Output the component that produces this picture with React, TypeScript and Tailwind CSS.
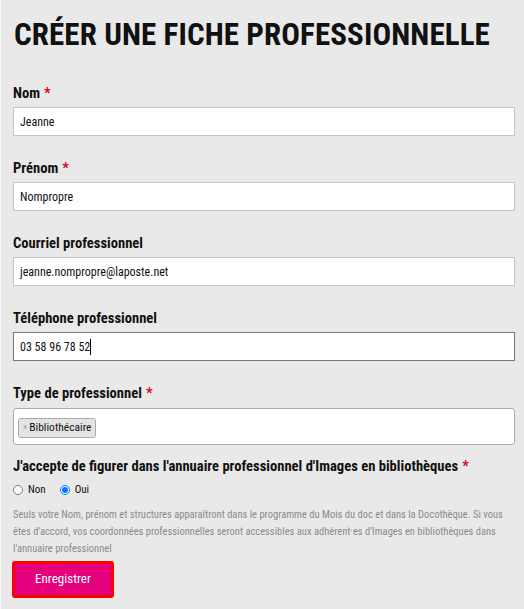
import { useState } from "react";

const font = "font-['Liberation_Sans_Narrow','Roboto_Condensed','Liberation_Sans',sans-serif]";

function Field({
  label,
  required,
  value,
  focused,
}: {
  label: string;
  required?: boolean;
  value: string;
  focused?: boolean;
}) {
  return (
    <div className="mb-[23px]">
      <label className="block text-[14.6px] font-bold leading-[18px] text-[#111] mb-[5px]">
        {label}
        {required && <span className="text-[#e2001a] ml-[4px]">*</span>}
      </label>
      <div
        className={
          "h-[29px] bg-white flex items-center px-[6px] text-[12px] text-[#111] border " +
          (focused ? "border-[#767676]" : "border-[#c4c4c4]")
        }
      >
        {value}
        {focused && <span className="inline-block w-[1px] h-[16px] bg-black" />}
      </div>
    </div>
  );
}

export default function App() {
  const [consent, setConsent] = useState("oui");

  return (
    <main className={`${font} w-[524px] h-[609px] bg-[#e9e9e9] border-l border-[#f7f7f7] pl-[12px] pr-[9px] pt-[18px] overflow-hidden`}>
      <h1 className="text-[31px] font-bold leading-[34px] text-[#111] tracking-[0.1px] mb-[32px] pl-[1px]">
        CRÉER UNE FICHE PROFESSIONNELLE
      </h1>

      <Field label="Nom" required value="Jeanne" />
      <Field label="Prénom" required value="Nompropre" />
      <Field label="Courriel professionnel" value="jeanne.nompropre@laposte.net" />
      <Field label="Téléphone professionnel" value="03 58 96 78 52" focused />

      <div className="mb-[12px]">
        <label className="block text-[14.6px] font-bold leading-[18px] text-[#111] mb-[6px]">
          Type de professionnel
          <span className="text-[#e2001a] ml-[4px]">*</span>
        </label>
        <div className="h-[37px] bg-white border border-[#aaa] rounded-[3px] px-[4px] pt-[4px]">
          <span className="inline-flex items-center h-[20px] px-[4px] bg-[#e4e4e4] border border-[#aaa] rounded-[3px] text-[11.5px] text-[#111]">
            <span className="text-[#999] text-[9px] mr-[2px]">×</span>
            Bibliothécaire
          </span>
        </div>
      </div>

      <div className="text-[14.6px] font-bold leading-[18px] text-[#111] mb-[7px]">
        J'accepte de figurer dans l'annuaire professionnel d'Images en bibliothèques
        <span className="text-[#e2001a] ml-[4px]">*</span>
      </div>

      <div className="flex items-center gap-[5px] text-[11px] text-[#111] mb-[7px]">
        <label className="flex items-center gap-[5px]">
          <input
            type="radio"
            name="consent"
            checked={consent === "non"}
            onChange={() => setConsent("non")}
            className="w-[10px] h-[10px] m-0"
          />
          <span className="mr-[9px]">Non</span>
        </label>
        <label className="flex items-center gap-[5px]">
          <input
            type="radio"
            name="consent"
            checked={consent === "oui"}
            onChange={() => setConsent("oui")}
            className="w-[10px] h-[10px] m-0"
          />
          <span>Oui</span>
        </label>
      </div>

      <p className="text-[10.5px] leading-[17px] text-[#8a8a8a] mb-[4px] pr-[8px]">
        Seuls votre Nom, prénom et structures apparaîtront dans le programme du Mois du doc et dans la
        Docothèque. Si vous êtes d'accord, vos coordonnées professionnelles seront accessibles aux
        adhérent·es d'Images en bibliothèques dans l'annuaire professionnel
      </p>

      <button
        type="button"
        className="w-[102px] h-[37px] bg-[#e5007e] border-[3px] border-[#ff0000] rounded-[3px] text-white text-[13px] -ml-[1px]"
      >
        Enregistrer
      </button>
    </main>
  );
}
